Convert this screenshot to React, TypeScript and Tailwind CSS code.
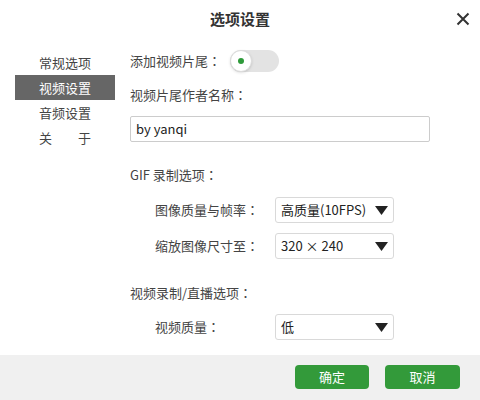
import React from "react";

const font = { fontFamily: '"Microsoft YaHei", "Noto Sans CJK SC", "Noto Sans", sans-serif' };

function Colon() {
  return <span style={{ fontFamily: '"Noto Sans CJK TC", sans-serif' }}>：</span>;
}

function Caret() {
  return (
    <svg width="13" height="9" viewBox="0 0 13 9" className="shrink-0">
      <path d="M0 0 H13 L6.5 9 Z" fill="#222" />
    </svg>
  );
}

function Select({ value }: { value: string }) {
  return (
    <div className="flex h-[26px] w-[119px] items-center justify-between rounded-[3px] border border-[#d9d9d9] bg-white pl-[5px] pr-[5px] text-[13px] text-[#222]">
      <span>{value}</span>
      <Caret />
    </div>
  );
}

function SelectRow({ label, value, top }: { label: string; value: string; top: string }) {
  return (
    <div className={`flex items-center ${top}`}>
      <div className="w-[145px] pl-[25px] text-[13px] text-[#444]">
        {label}
        <Colon />
      </div>
      <Select value={value} />
    </div>
  );
}

export default function App() {
  return (
    <div className="h-[400px] w-[480px] overflow-hidden bg-white" style={font}>
      <div className="relative flex h-[38px] items-center justify-center">
        <div className="text-[15px] font-bold text-[#333]">选项设置</div>
        <svg className="absolute right-[10px] top-[12px]" width="14" height="14" viewBox="0 0 14 14">
          <path d="M1.5 1.5 L12.5 12.5 M12.5 1.5 L1.5 12.5" stroke="#333" strokeWidth="2" />
        </svg>
      </div>

      <div className="flex h-[317px]">
        <div className="ml-[15px] w-[100px] pt-[12px] text-[13px] text-[#444]">
          <div className="flex h-[25px] items-center pl-[24px]">常规选项</div>
          <div className="flex h-[25px] items-center bg-[#666666] pl-[24px] text-white">视频设置</div>
          <div className="flex h-[25px] items-center pl-[24px]">音频设置</div>
          <div className="flex h-[25px] items-center pl-[24px]">
            <div className="flex w-[52px] justify-between">
              <span>关</span>
              <span>于</span>
            </div>
          </div>
        </div>

        <div className="ml-[15px] flex-1 pt-[12px] text-[13px] text-[#444]">
          <div className="flex h-[22px] items-center">
            <span className="w-[100px]">
              添加视频片尾
              <Colon />
            </span>
            <div className="relative h-[22px] w-[49px] rounded-full bg-[#e3e3e3]">
              <div className="absolute left-0 top-0 flex h-[22px] w-[22px] items-center justify-center rounded-full border border-[#dcdcdc] bg-white shadow-sm">
                <div className="h-[6px] w-[6px] rounded-full bg-[#2e9a3a]" />
              </div>
            </div>
          </div>

          <div className="mt-[13px] h-[20px] leading-[20px]">
            视频片尾作者名称
            <Colon />
          </div>

          <div className="mt-[11px] flex h-[26px] w-[300px] items-center rounded-[2px] border border-[#cccccc] pl-[5px] text-[13px] text-[#222]">
            by yanqi
          </div>

          <div className="mt-[23px] h-[20px] leading-[20px]">
            GIF 录制选项
            <Colon />
          </div>

          <SelectRow label="图像质量与帧率" value="高质量(10FPS)" top="mt-[12px]" />
          <SelectRow label="缩放图像尺寸至" value="320 × 240" top="mt-[10px]" />

          <div className="mt-[24px] h-[20px] leading-[20px]">
            视频录制/直播选项
            <Colon />
          </div>

          <SelectRow label="视频质量" value="低" top="mt-[11px]" />
        </div>
      </div>

      <div className="flex h-[45px] items-start justify-end gap-[16px] bg-[#f0f0f0] pr-[20px] pt-[10px]">
        <button className="flex h-[24px] w-[74px] items-center justify-center rounded-[4px] bg-[#339a3a] text-[13px] text-white">
          确定
        </button>
        <button className="flex h-[24px] w-[75px] items-center justify-center rounded-[4px] bg-[#339a3a] text-[13px] text-white">
          取消
        </button>
      </div>
    </div>
  );
}
